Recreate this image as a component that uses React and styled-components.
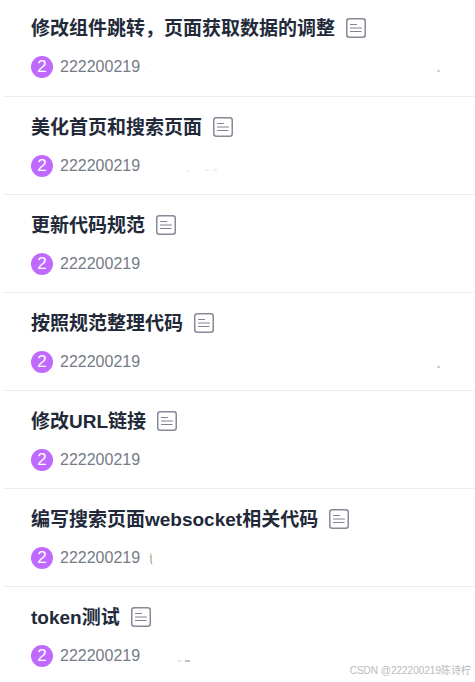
import styled, { createGlobalStyle } from "styled-components";

const commits = [
  {
    title: "修改组件跳转，页面获取数据的调整",
    author: "222200219",
    marks: [
      { d: "M2 8h1M3 16h1", color: "#f3e6b8" },
      { d: "M289 15h3", color: "#a9abb8" },
    ],
  },
  {
    title: "美化首页和搜索页面",
    author: "222200219",
    marks: [{ d: "M39 16h2M57 15h4M65 15h4", color: "#dddee2" }],
  },
  { title: "更新代码规范", author: "222200219", marks: [] },
  {
    title: "按照规范整理代码",
    author: "222200219",
    marks: [{ d: "M289 16h3", color: "#9aa0ae" }],
  },
  { title: "修改URL链接", author: "222200219", marks: [] },
  {
    title: "编写搜索页面websocket相关代码",
    author: "222200219",
    marks: [
      { d: "M1 9h3M3 6v3", color: "#e3c39c" },
      { d: "M3 9v6l1 2", color: "#8d8a88" },
    ],
  },
  {
    title: "token测试",
    author: "222200219",
    marks: [
      { d: "M30 16h3", color: "#c3c7cf" },
      { d: "M37 16h5", color: "#7d8390" },
    ],
  },
];

const App = () => {
  return (
    <>
      <GlobalStyle />
      <Page>
        <CommitList>
          {commits.map(({ title, author, marks }) => (
            <Commit key={title}>
              <TitleRow>
                <Title>{title}</Title>
                <DetailsButton type="button" aria-label={`查看 ${title}`}>
                  <NoteIcon />
                </DetailsButton>
              </TitleRow>
              <Meta>
                <Avatar aria-hidden="true">2</Avatar>
                <Author>{author}</Author>
                <Marks viewBox="0 0 300 22" aria-hidden="true">
                  {marks.map(({ d, color }) => (
                    <path key={d} d={d} stroke={color} />
                  ))}
                </Marks>
              </Meta>
            </Commit>
          ))}
        </CommitList>
        <Watermark>CSDN @222200219陈诗柠</Watermark>
      </Page>
    </>
  );
};

const NoteIcon = () => (
  <svg width="20" height="20" viewBox="0 0 20 20" fill="none">
    <rect
      x="0.75"
      y="0.75"
      width="18.5"
      height="18.5"
      rx="2.5"
      stroke="#858a96"
      strokeWidth="1.5"
    />
    <path
      d="M4.5 6.5h6M4.5 10h11M4.5 13.5h10.5"
      stroke="#7f8490"
      strokeWidth="1.2"
      strokeLinecap="round"
    />
  </svg>
);

const GlobalStyle = createGlobalStyle`
  * {
    box-sizing: border-box;
  }

  body {
    margin: 0;
    background-color: #ffffff;
    font-family: "Liberation Sans", "Noto Sans CJK SC", sans-serif;
  }
`;

const Page = styled.main`
  position: relative;
  padding-left: 4px;
`;

const CommitList = styled.ul`
  list-style: none;
  margin: 0;
  padding: 0;
`;

const Commit = styled.li`
  display: flex;
  flex-direction: column;
  gap: 14px;
  padding: 16px 27px 17px;
  border-bottom: 1px solid #ebecf0;

  &:first-child {
    padding-top: 14px;
    padding-bottom: 18px;
  }

  &:last-child {
    border-bottom: 0;
    padding-bottom: 15px;
  }
`;

const TitleRow = styled.div`
  display: flex;
  align-items: center;
  gap: 11px;
  height: 28px;
`;

const Title = styled.h3`
  margin: 0;
  padding-top: 2px;
  color: #222a3a;
  font-size: 19px;
  font-weight: 700;
  line-height: 26px;
  white-space: nowrap;
`;

const DetailsButton = styled.button`
  display: flex;
  padding: 0;
  border: none;
  background: none;
  cursor: pointer;
`;

const Meta = styled.div`
  display: flex;
  align-items: center;
  height: 22px;
`;

const Avatar = styled.span`
  flex: none;
  width: 22px;
  height: 22px;
  margin-right: 7px;
  border-radius: 50%;
  background-color: #c069ff;
  color: #ffffff;
  font-size: 17px;
  line-height: 22px;
  text-align: center;
`;

const Author = styled.span`
  color: #767b85;
  font-size: 16px;
  line-height: 22px;
`;

const Marks = styled.svg`
  flex: none;
  width: 300px;
  height: 22px;
  margin-left: 8px;
  fill: none;
`;

const Watermark = styled.small`
  position: absolute;
  right: 4px;
  bottom: 4px;
  color: #b9babd;
  font-size: 10px;
  line-height: 14px;
`;

export default App;
